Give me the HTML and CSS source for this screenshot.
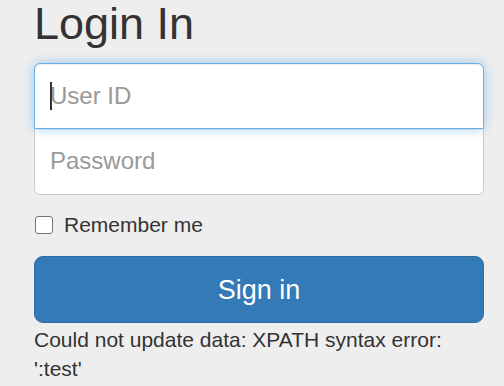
FILE: index.html
```html
<!DOCTYPE html>
<html lang="en">
<head>
    <meta charset="UTF-8">
    <meta name="viewport" content="width=device-width, initial-scale=1.0">
    <title>Login</title>
    <link rel="stylesheet" href="styles.css">
</head>
<body>
    <form class="form-signin">
        <h2 class="form-signin-heading">Login In</h2>

        <div class="field">
            <label for="userId" class="sr-only">User ID</label>
            <input type="text" id="userId" class="form-control first focused" placeholder="User ID">
            <span class="caret"></span>
        </div>

        <label for="password" class="sr-only">Password</label>
        <input type="password" id="password" class="form-control last" placeholder="Password">

        <div class="checkbox">
            <label>
                <input type="checkbox" value="remember-me"> Remember me
            </label>
        </div>

        <button class="btn-signin" type="button">Sign in</button>

        <p class="error">Could not update data: XPATH syntax error: ':test'</p>
    </form>
</body>
</html>
```

FILE: styles.css
```css
html, body {
    margin: 0;
    padding: 0;
}

body {
    font-family: "Liberation Sans", Arial, sans-serif;
    background-color: #eee;
    color: #333;
    font-size: 21px;
    line-height: 30px;
}

.form-signin {
    width: 450px;
    padding: 0 20px 0 34px;
}

.form-signin-heading {
    margin: 0 0 15px;
    font-size: 45px;
    font-weight: 500;
    line-height: 48px;
}

.sr-only {
    position: absolute;
    width: 1px;
    height: 1px;
    overflow: hidden;
    clip: rect(0, 0, 0, 0);
}

.field {
    position: relative;
    z-index: 2;
    margin-bottom: -1px;
}

.caret {
    position: absolute;
    left: 16px;
    top: 19px;
    width: 2px;
    height: 28px;
    background-color: #333;
}

.form-control {
    display: block;
    position: relative;
    width: 100%;
    box-sizing: border-box;
    padding: 15px;
    font-family: inherit;
    font-size: 24px;
    line-height: 1.42857;
    color: #555;
    background-color: #fff;
    border: 1px solid #ccc;
    border-radius: 6px;
    box-shadow: inset 0 1px 1px rgba(0, 0, 0, .075);
    outline: none;
}

.form-control::placeholder {
    color: #999;
}

.form-control.focused {
    border-color: #66afe9;
    box-shadow: inset 0 1px 1px rgba(0, 0, 0, .075), 0 0 12px rgba(102, 175, 233, .6);
}

.form-control.first {
    border-bottom-left-radius: 0;
    border-bottom-right-radius: 0;
}

.form-control.last {
    border-top-left-radius: 0;
    border-top-right-radius: 0;
}

.checkbox {
    margin: 15px 0 16px;
}

.checkbox label {
    display: flex;
    align-items: center;
    gap: 11px;
    font-weight: normal;
    cursor: pointer;
}

.checkbox input {
    appearance: none;
    width: 18px;
    height: 18px;
    margin: 1px 0 0 1px;
    background: #fff;
    border: 1.5px solid #767676;
    border-radius: 3px;
    box-sizing: border-box;
}

.btn-signin {
    display: block;
    width: 100%;
    height: 67px;
    padding: 15px 24px;
    font-family: inherit;
    font-size: 27px;
    line-height: 36px;
    color: #fff;
    background-color: #337ab7;
    border: 1px solid #2e6da4;
    border-radius: 9px;
    cursor: pointer;
}

.error {
    margin: 2px 0 0;
    line-height: 29px;
}
```
